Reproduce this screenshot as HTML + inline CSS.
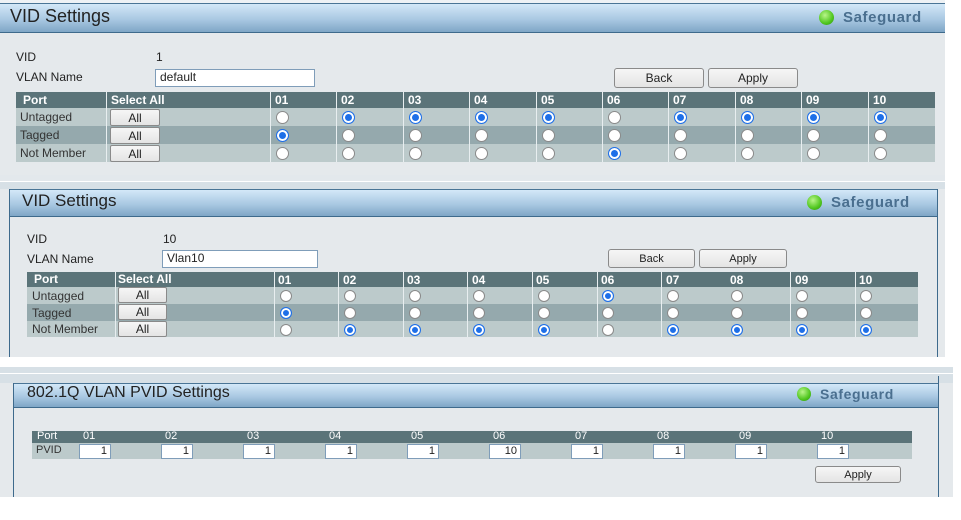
<!DOCTYPE html>
<html><head><meta charset="utf-8"><style>
*{margin:0;padding:0;box-sizing:border-box}
body{width:961px;height:520px;position:relative;background:#fff;font-family:"Liberation Sans",Arial,sans-serif;overflow:hidden;color:#222}
div,span{position:absolute}
.hd{background:linear-gradient(#d3e8f8,#a9c8e2 55%,#7fa6c6);border-top:1px solid #4a7596;border-bottom:1px solid #3e6a8c;color:#1a1a1a}
.sg{color:#4a6f8f;font-weight:bold;letter-spacing:0.6px}
.dot{border-radius:50%;background:radial-gradient(circle at 40% 35%,#b9f58a,#4fc61e 60%,#2e8a10)}
.t{font-size:12px}
.in{background:#fff;border:1px solid #7f9db9;font-size:12px;padding-left:4px;line-height:15px}
.btn{background:linear-gradient(#f6f6f6,#e4e4e4);border:1px solid #8a8a8a;border-radius:3px;font-size:12px;text-align:center}
.r{width:13px;height:13px;border-radius:50%;background:#fff;border:1px solid #8a8a8a}
.c{background:#1e6fe8;border:1px solid #1e6fe8;box-shadow:inset 0 0 0 2px #fff}
.hr{background:#5b7479;color:#fff;font-size:12px;font-weight:bold}
.vl{width:1px;background:#e8eef0}
</style></head><body>

<!-- Panel 1 -->
<div style="left:0;top:0;width:945px;height:180px;background:#e5e9ec"></div>
<div style="left:0;top:0;width:945px;height:4px;background:#eef2f5"></div>
<div class="hd" style="left:0;top:3px;width:945px;height:30px"></div>
<div style="left:10px;top:6px;font-size:18px">VID Settings</div>
<div class="dot" style="left:819px;top:10px;width:15px;height:15px"></div>
<div class="sg" style="left:843px;top:9px;font-size:15px">Safeguard</div>
<div class="t" style="left:16px;top:50px">VID</div>
<div class="t" style="left:156px;top:50px">1</div>
<div class="t" style="left:16px;top:70px">VLAN Name</div>
<div class="in" style="left:155px;top:69px;width:160px;height:18px">default</div>
<div class="btn" style="left:614px;top:68px;width:90px;height:20px;line-height:18px">Back</div>
<div class="btn" style="left:708px;top:68px;width:90px;height:20px;line-height:18px">Apply</div>
<div style="left:16px;top:92px;width:919px;height:16px;background:#5b7479"></div>
<div style="left:16px;top:108px;width:919px;height:18px;background:#bccacb"></div>
<div style="left:16px;top:126px;width:919px;height:18px;background:#95a9ad"></div>
<div style="left:16px;top:144px;width:919px;height:18px;background:#bccacb"></div>
<div class="hr" style="left:23px;top:93px;background:none">Port</div>
<div class="hr" style="left:111px;top:93px;background:none">Select All</div>
<div class="t" style="left:20px;top:110px;color:#333">Untagged</div>
<div class="t" style="left:20px;top:128px;color:#333">Tagged</div>
<div class="t" style="left:20px;top:146px;color:#333">Not Member</div>
<div class="btn" style="left:110px;top:109px;width:50px;height:17px;line-height:16px;border-radius:2px">All</div>
<div class="btn" style="left:110px;top:127px;width:50px;height:17px;line-height:16px;border-radius:2px">All</div>
<div class="btn" style="left:110px;top:145px;width:50px;height:17px;line-height:16px;border-radius:2px">All</div>
<div class="vl" style="left:106px;top:92px;height:70px"></div>
<div class="vl" style="left:270px;top:92px;height:70px"></div><div class="vl" style="left:336px;top:92px;height:70px"></div><div class="vl" style="left:403px;top:92px;height:70px"></div><div class="vl" style="left:469px;top:92px;height:70px"></div><div class="vl" style="left:536px;top:92px;height:70px"></div><div class="vl" style="left:602px;top:92px;height:70px"></div><div class="vl" style="left:668px;top:92px;height:70px"></div><div class="vl" style="left:735px;top:92px;height:70px"></div><div class="vl" style="left:801px;top:92px;height:70px"></div><div class="vl" style="left:868px;top:92px;height:70px"></div>
<div class="hr" style="left:275px;top:93px;background:none">01</div><div class="hr" style="left:341px;top:93px;background:none">02</div><div class="hr" style="left:408px;top:93px;background:none">03</div><div class="hr" style="left:474px;top:93px;background:none">04</div><div class="hr" style="left:541px;top:93px;background:none">05</div><div class="hr" style="left:607px;top:93px;background:none">06</div><div class="hr" style="left:673px;top:93px;background:none">07</div><div class="hr" style="left:740px;top:93px;background:none">08</div><div class="hr" style="left:806px;top:93px;background:none">09</div><div class="hr" style="left:873px;top:93px;background:none">10</div>
<div class="r" style="left:276px;top:111px"></div><div class="r c" style="left:342px;top:111px"></div><div class="r c" style="left:409px;top:111px"></div><div class="r c" style="left:475px;top:111px"></div><div class="r c" style="left:542px;top:111px"></div><div class="r" style="left:608px;top:111px"></div><div class="r c" style="left:674px;top:111px"></div><div class="r c" style="left:741px;top:111px"></div><div class="r c" style="left:807px;top:111px"></div><div class="r c" style="left:874px;top:111px"></div>
<div class="r c" style="left:276px;top:129px"></div><div class="r" style="left:342px;top:129px"></div><div class="r" style="left:409px;top:129px"></div><div class="r" style="left:475px;top:129px"></div><div class="r" style="left:542px;top:129px"></div><div class="r" style="left:608px;top:129px"></div><div class="r" style="left:674px;top:129px"></div><div class="r" style="left:741px;top:129px"></div><div class="r" style="left:807px;top:129px"></div><div class="r" style="left:874px;top:129px"></div>
<div class="r" style="left:276px;top:147px"></div><div class="r" style="left:342px;top:147px"></div><div class="r" style="left:409px;top:147px"></div><div class="r" style="left:475px;top:147px"></div><div class="r" style="left:542px;top:147px"></div><div class="r c" style="left:608px;top:147px"></div><div class="r" style="left:674px;top:147px"></div><div class="r" style="left:741px;top:147px"></div><div class="r" style="left:807px;top:147px"></div><div class="r" style="left:874px;top:147px"></div>

<!-- Panel 2 -->
<div style="left:0;top:175px;width:945px;height:6px;background:#e3e8ec"></div>
<div style="left:0;top:182px;width:945px;height:175px;background:#e5e9ec"></div>
<div style="left:0;top:182px;width:945px;height:7px;background:#d7e0e6"></div>
<div style="left:9px;top:189px;width:1px;height:168px;background:#3e6a8c"></div>
<div style="left:937px;top:189px;width:1px;height:168px;background:#3e6a8c"></div>
<div class="hd" style="left:10px;top:189px;width:927px;height:28px"></div>
<div style="left:22px;top:191px;font-size:17px">VID Settings</div>
<div class="dot" style="left:807px;top:195px;width:15px;height:15px"></div>
<div class="sg" style="left:831px;top:194px;font-size:15px">Safeguard</div>
<div class="t" style="left:27px;top:232px">VID</div>
<div class="t" style="left:163px;top:232px">10</div>
<div class="t" style="left:27px;top:252px">VLAN Name</div>
<div class="in" style="left:162px;top:250px;width:156px;height:18px">Vlan10</div>
<div class="btn" style="left:608px;top:249px;width:87px;height:19px;line-height:18px;font-size:11px">Back</div>
<div class="btn" style="left:699px;top:249px;width:88px;height:19px;line-height:18px;font-size:11px">Apply</div>
<div style="left:27px;top:272px;width:891px;height:15px;background:#5b7479"></div>
<div style="left:27px;top:287px;width:891px;height:17px;background:#bccacb"></div>
<div style="left:27px;top:304px;width:891px;height:17px;background:#95a9ad"></div>
<div style="left:27px;top:321px;width:891px;height:16px;background:#bccacb"></div>
<div class="hr" style="left:34px;top:272px;background:none">Port</div>
<div class="hr" style="left:118px;top:272px;background:none">Select All</div>
<div class="t" style="left:32px;top:289px;color:#333">Untagged</div>
<div class="t" style="left:32px;top:306px;color:#333">Tagged</div>
<div class="t" style="left:32px;top:322px;color:#333">Not Member</div>
<div class="btn" style="left:118px;top:287px;width:49px;height:16px;line-height:15px;border-radius:2px">All</div>
<div class="btn" style="left:118px;top:304px;width:49px;height:16px;line-height:15px;border-radius:2px">All</div>
<div class="btn" style="left:118px;top:321px;width:49px;height:16px;line-height:15px;border-radius:2px">All</div>
<div class="vl" style="left:115px;top:272px;height:65px"></div>
<div class="vl" style="left:274px;top:272px;height:65px"></div><div class="vl" style="left:338px;top:272px;height:65px"></div><div class="vl" style="left:403px;top:272px;height:65px"></div><div class="vl" style="left:467px;top:272px;height:65px"></div><div class="vl" style="left:532px;top:272px;height:65px"></div><div class="vl" style="left:597px;top:272px;height:65px"></div><div class="vl" style="left:661px;top:272px;height:65px"></div><div class="vl" style="left:790px;top:272px;height:65px"></div><div class="vl" style="left:855px;top:272px;height:65px"></div>
<div class="hr" style="left:278px;top:273px;background:none">01</div><div class="hr" style="left:343px;top:273px;background:none">02</div><div class="hr" style="left:407px;top:273px;background:none">03</div><div class="hr" style="left:472px;top:273px;background:none">04</div><div class="hr" style="left:536px;top:273px;background:none">05</div><div class="hr" style="left:601px;top:273px;background:none">06</div><div class="hr" style="left:666px;top:273px;background:none">07</div><div class="hr" style="left:730px;top:273px;background:none">08</div><div class="hr" style="left:795px;top:273px;background:none">09</div><div class="hr" style="left:859px;top:273px;background:none">10</div>
<div class="r" style="left:280px;top:290px;width:12px;height:12px"></div><div class="r" style="left:344px;top:290px;width:12px;height:12px"></div><div class="r" style="left:409px;top:290px;width:12px;height:12px"></div><div class="r" style="left:473px;top:290px;width:12px;height:12px"></div><div class="r" style="left:538px;top:290px;width:12px;height:12px"></div><div class="r c" style="left:602px;top:290px;width:12px;height:12px"></div><div class="r" style="left:667px;top:290px;width:12px;height:12px"></div><div class="r" style="left:731px;top:290px;width:12px;height:12px"></div><div class="r" style="left:796px;top:290px;width:12px;height:12px"></div><div class="r" style="left:860px;top:290px;width:12px;height:12px"></div>
<div class="r c" style="left:280px;top:307px;width:12px;height:12px"></div><div class="r" style="left:344px;top:307px;width:12px;height:12px"></div><div class="r" style="left:409px;top:307px;width:12px;height:12px"></div><div class="r" style="left:473px;top:307px;width:12px;height:12px"></div><div class="r" style="left:538px;top:307px;width:12px;height:12px"></div><div class="r" style="left:602px;top:307px;width:12px;height:12px"></div><div class="r" style="left:667px;top:307px;width:12px;height:12px"></div><div class="r" style="left:731px;top:307px;width:12px;height:12px"></div><div class="r" style="left:796px;top:307px;width:12px;height:12px"></div><div class="r" style="left:860px;top:307px;width:12px;height:12px"></div>
<div class="r" style="left:280px;top:324px;width:12px;height:12px"></div><div class="r c" style="left:344px;top:324px;width:12px;height:12px"></div><div class="r c" style="left:409px;top:324px;width:12px;height:12px"></div><div class="r c" style="left:473px;top:324px;width:12px;height:12px"></div><div class="r c" style="left:538px;top:324px;width:12px;height:12px"></div><div class="r" style="left:602px;top:324px;width:12px;height:12px"></div><div class="r c" style="left:667px;top:324px;width:12px;height:12px"></div><div class="r c" style="left:731px;top:324px;width:12px;height:12px"></div><div class="r c" style="left:796px;top:324px;width:12px;height:12px"></div><div class="r c" style="left:860px;top:324px;width:12px;height:12px"></div>

<!-- Panel 3 -->
<div style="left:0;top:367px;width:953px;height:130px;background:#e5e9ec"></div>
<div style="left:0;top:367px;width:953px;height:6px;background:#d7e0e6"></div>
<div style="left:0;top:373px;width:953px;height:1px;background:#fff"></div>
<div style="left:0;top:374px;width:953px;height:9px;background:#d7e0e6"></div>
<div style="left:13px;top:383px;width:1px;height:114px;background:#3e6a8c"></div>
<div style="left:938px;top:376px;width:1px;height:121px;background:#3e6a8c"></div>
<div class="hd" style="left:14px;top:383px;width:924px;height:25px"></div>
<div style="left:27px;top:384px;font-size:16px">802.1Q VLAN PVID Settings</div>
<div class="dot" style="left:797px;top:387px;width:14px;height:14px"></div>
<div class="sg" style="left:820px;top:386px;font-size:14px">Safeguard</div>
<div style="left:32px;top:431px;width:880px;height:12px;background:#5b7479"></div>
<div style="left:32px;top:443px;width:880px;height:16px;background:#bccacb"></div>
<div style="left:37px;top:430px;font-size:11px;color:#fff">Port</div>
<div style="left:36px;top:444px;font-size:11px;color:#333">PVID</div>
<div style="left:83px;top:430px;font-size:11px;color:#fff">01</div><div style="left:165px;top:430px;font-size:11px;color:#fff">02</div><div style="left:247px;top:430px;font-size:11px;color:#fff">03</div><div style="left:329px;top:430px;font-size:11px;color:#fff">04</div><div style="left:411px;top:430px;font-size:11px;color:#fff">05</div><div style="left:493px;top:430px;font-size:11px;color:#fff">06</div><div style="left:575px;top:430px;font-size:11px;color:#fff">07</div><div style="left:657px;top:430px;font-size:11px;color:#fff">08</div><div style="left:739px;top:430px;font-size:11px;color:#fff">09</div><div style="left:821px;top:430px;font-size:11px;color:#fff">10</div>
<div class="in" style="left:79px;top:444px;width:32px;height:15px;text-align:right;padding-right:3px;font-size:11px;line-height:13px">1</div>
<div class="in" style="left:161px;top:444px;width:32px;height:15px;text-align:right;padding-right:3px;font-size:11px;line-height:13px">1</div>
<div class="in" style="left:243px;top:444px;width:32px;height:15px;text-align:right;padding-right:3px;font-size:11px;line-height:13px">1</div>
<div class="in" style="left:325px;top:444px;width:32px;height:15px;text-align:right;padding-right:3px;font-size:11px;line-height:13px">1</div>
<div class="in" style="left:407px;top:444px;width:32px;height:15px;text-align:right;padding-right:3px;font-size:11px;line-height:13px">1</div>
<div class="in" style="left:489px;top:444px;width:32px;height:15px;text-align:right;padding-right:3px;font-size:11px;line-height:13px">10</div>
<div class="in" style="left:571px;top:444px;width:32px;height:15px;text-align:right;padding-right:3px;font-size:11px;line-height:13px">1</div>
<div class="in" style="left:653px;top:444px;width:32px;height:15px;text-align:right;padding-right:3px;font-size:11px;line-height:13px">1</div>
<div class="in" style="left:735px;top:444px;width:32px;height:15px;text-align:right;padding-right:3px;font-size:11px;line-height:13px">1</div>
<div class="in" style="left:817px;top:444px;width:32px;height:15px;text-align:right;padding-right:3px;font-size:11px;line-height:13px">1</div>
<div class="btn" style="left:815px;top:466px;width:86px;height:17px;line-height:16px;font-size:11px">Apply</div>
</body></html>
